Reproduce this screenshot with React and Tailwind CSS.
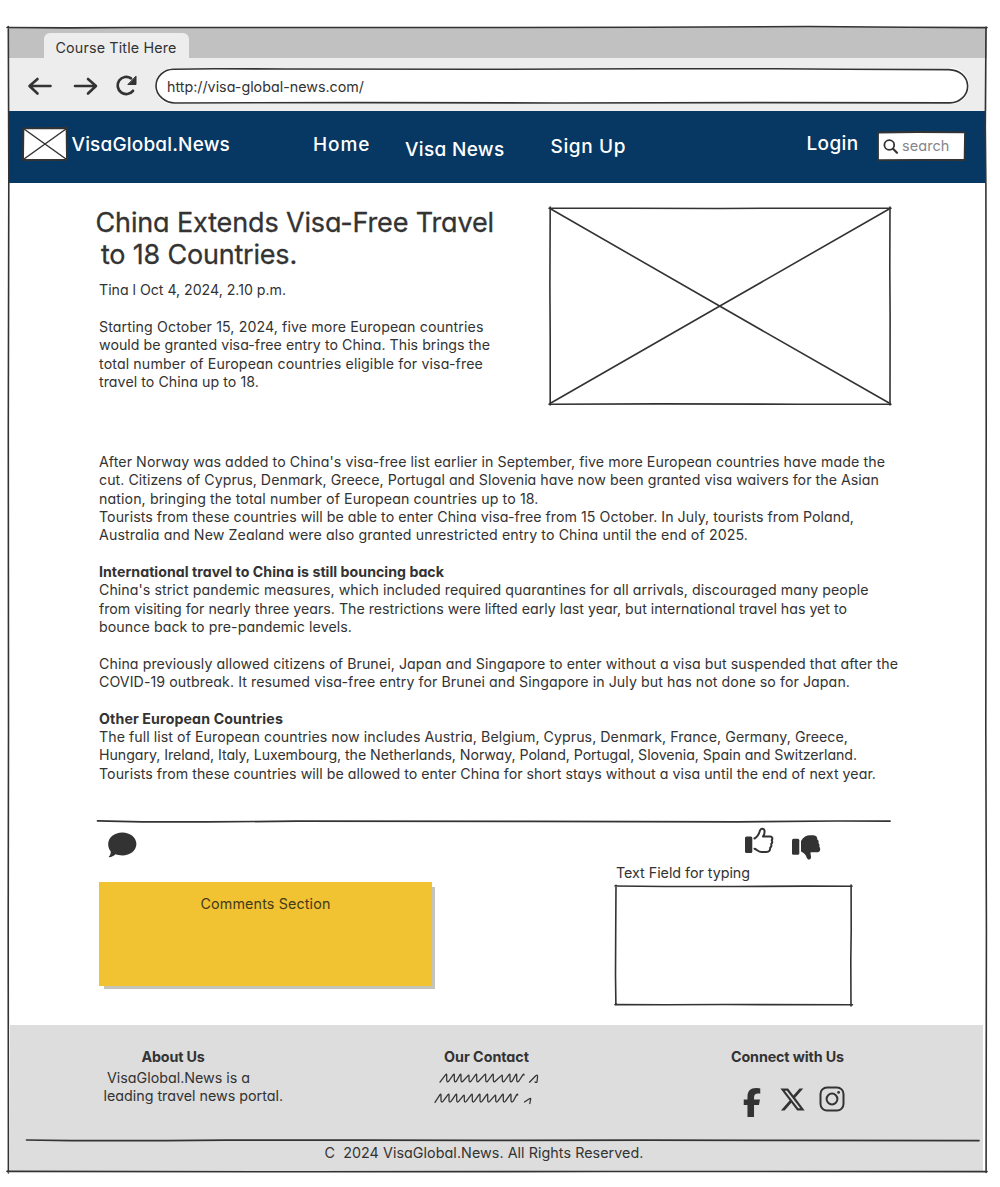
import { useLayoutEffect, useRef } from "react";
import { FaFacebookF, FaXTwitter } from "react-icons/fa6";

const INK = "#333333";

// One line of text, tracked so that it fills the given width.
function Line({ w, className = "", children }) {
  const ref = useRef(null);
  useLayoutEffect(() => {
    const el = ref.current;
    el.style.letterSpacing = "0px";
    const natural = el.getBoundingClientRect().width;
    el.style.letterSpacing = `${(w - natural) / el.textContent.length}px`;
  }, [w]);
  return (
    <div className={`whitespace-pre ${className}`} style={{ width: w }}>
      <span ref={ref}>{children}</span>
    </div>
  );
}

function Sketch({ w, h, className = "", children }) {
  return (
    <svg
      width={w}
      height={h}
      viewBox={`0 0 ${w} ${h}`}
      fill="none"
      stroke={INK}
      strokeWidth="1.6"
      strokeLinecap="round"
      strokeLinejoin="round"
      className={`block shrink-0 overflow-visible ${className}`}
    >
      {children}
    </svg>
  );
}

// Handwriting scribble: slanted up strokes joined by short steep down strokes.
function scribble(startX, top, bottom, peaks) {
  let d = `M${startX} ${bottom}`;
  peaks.forEach((x, i) => {
    const lift = (i * 3) % 4 === 1 ? 1 : 0;
    d += `L${x - 1} ${top + lift + 0.6}Q${x} ${top + lift - 0.4} ${x} ${top + lift + 1}`;
    if (i < peaks.length - 1) {
      d += `L${x} ${bottom - 2}Q${x + 0.4} ${bottom + 0.8} ${x + 2.2} ${bottom - 1.2}`;
    }
  });
  return d;
}

const scribbleTop = scribble(6, 3, 11.2, [12.7, 20.3, 27, 35, 42.7, 51.7, 59.3, 68.3, 76, 82.7, 90]);
const scribbleLow = scribble(1, 23, 31.4, [7, 15, 22.7, 30.3, 38.3, 46, 53.7, 61.7, 69.3, 77, 83.7]);

const lead = [
  [384.5, "Starting October 15, 2024, five more European countries"],
  [391, "would be granted visa-free entry to China. This brings the"],
  [384, "total number of European countries eligible for visa-free"],
  [160, "travel to China up to 18."],
];

const body = [
  [786, "After Norway was added to China's visa-free list earlier in September, five more European countries have made the"],
  [780, "cut. Citizens of Cyprus, Denmark, Greece, Portugal and Slovenia have now been granted visa waivers for the Asian"],
  [439.5, "nation, bringing the total number of European countries up to 18."],
  [755, "Tourists from these countries will be able to enter China visa-free from 15 October. In July, tourists from Poland,"],
  [649, "Australia and New Zealand were also granted unrestricted entry to China until the end of 2025."],
  null,
  [345, "International travel to China is still bouncing back", true],
  [769.5, "China's strict pandemic measures, which included required quarantines for all arrivals, discouraged many people"],
  [748, "from visiting for nearly three years. The restrictions were lifted early last year, but international travel has yet to"],
  [253, "bounce back to pre-pandemic levels."],
  null,
  [799, "China previously allowed citizens of Brunei, Japan and Singapore to enter without a visa but suspended that after the"],
  [751, "COVID-19 outbreak. It resumed visa-free entry for Brunei and Singapore in July but has not done so for Japan."],
  null,
  [184, "Other European Countries", true],
  [749, "The full list of European countries now includes Austria, Belgium, Cyprus, Denmark, France, Germany, Greece,"],
  [758, "Hungary, Ireland, Italy, Luxembourg, the Netherlands, Norway, Poland, Portugal, Slovenia, Spain and Switzerland."],
  [777, "Tourists from these countries will be allowed to enter China for short stays without a visa until the end of next year."],
];

function Browser() {
  return (
    <header>
      <div className="flex h-[31px] items-end bg-[#c1c1c1] pl-9">
        <div className="h-[25px] w-[145px] rounded-t-md bg-[#ededed] pl-[11.5px] text-[14.3px] leading-[30px]">
          <Line w={121}>Course Title Here</Line>
        </div>
      </div>
      <div className="flex h-[53px] items-start bg-[#ededed] pl-5">
        <Sketch w={25} h={20} className="mt-[18px]">
          <path d="M2 10h20.5M9.5 3l-8 7 8 7.5" strokeWidth="2.6" />
        </Sketch>
        <Sketch w={25} h={20} className="ml-5 mt-[18px]">
          <path d="M2 10h20.5M15 3l8 7-8 7.5" strokeWidth="2.6" />
        </Sketch>
        <Sketch w={23} h={22} className="ml-4 mt-4">
          <path d="M17 4.3a8.6 8.6 0 1 0 2 12.5" strokeWidth="2.7" />
          <path d="M22 2.500v8h-7.800z" fill={INK} strokeWidth="1" />
        </Sketch>
        <div className="relative ml-[18px] mt-[10px] h-9 w-[814px] rounded-full bg-white pl-3 text-[14.3px] leading-[37px]">
          <Sketch w={814} h={36} className="absolute left-0 top-0">
            <path d="M18 1.3L60 .8L130 1L330 1.3L490 .8L620 .7L690 1.2L794 1.6C804 2 812 8 812.6 17.5C813 27 805 34.5 795 34.9L600 34.6L400 35L200 34.6L20 35C10 35 1 27 1 18C1 8.5 9 1.5 18 1.3Z" />
          </Sketch>
          <Line w={197}>http://visa-global-news.com/</Line>
        </div>
      </div>
    </header>
  );
}

function Nav() {
  return (
    <nav className="flex h-[72px] w-[978px] items-start bg-[#073763] pl-[14px] text-[19px] font-medium leading-6 text-white">
      <Sketch w={46} h={34} className="mt-4">
        <path d="M1.4 1.4L44.6 1L45 32.8L1 33Z" fill="white" strokeWidth="1.9" />
        <path d="M2 2L44 32M44 2L2 32" strokeWidth="1.5" />
      </Sketch>
      <Line w={158.5} className="ml-[3.5px] mt-[22px]">VisaGlobal.News</Line>
      <Line w={57.5} className="ml-[83px] mt-[22px]">Home</Line>
      <Line w={99.5} className="ml-[34.5px] mt-[27px]">Visa News</Line>
      <Line w={75.5} className="ml-[46px] mt-6">Sign Up</Line>
      <Line w={52} className="ml-[180.5px] mt-[21px]">Login</Line>
      <div className="relative ml-[18px] mt-[20px] h-[30px] w-[89px]">
        <Sketch w={89} h={30} className="absolute left-0 top-0">
          <path d="M1 1.5L40 1L88 1.4L87.6 29L40 28.8L1 29.2Z" fill="white" strokeWidth="1.8" />
          <circle cx="12.3" cy="14" r="4.9" strokeWidth="1.8" />
          <path d="M16 17.8l4 4" strokeWidth="2.1" />
        </Sketch>
        <div className="relative ml-[25.5px] text-[14.5px] font-normal leading-[30px] text-[#85858a]">
          <Line w={47.5}>search</Line>
        </div>
      </div>
    </nav>
  );
}

function Hero() {
  return (
    <section className="flex h-[256px] pl-[88px]">
      <div className="w-[453px]">
        <h1 className="pt-6 text-[27px] leading-8 [-webkit-text-stroke:0.3px_#333333]">
          <Line w={398.5} className="-ml-[0.5px]">China Extends Visa-Free Travel</Line>
          <Line w={196} className="ml-[5px]">to 18 Countries.</Line>
        </h1>
        <div className="ml-[3px] mt-[10px] text-[14.2px] leading-[18.33px]">
          <Line w={187}>Tina l Oct 4, 2024, 2.10 p.m.</Line>
          <div className="mt-[18.6px]">
            {lead.map(([w, t]) => <Line key={t} w={w}>{t}</Line>)}
          </div>
        </div>
      </div>
      <Sketch w={342} h={198} className="mt-6">
        <path d="M0 1.2L80 1.2L170 1.5L240 1.2L342 1.2M341 0L340.8 60L341.1 110L341 198M342 197.3L250 197.2L110 196.9L0 197.3M1.2 198L1.2 130L.9 80L1.2 0" />
        <path d="M1 1.5L171 99.3L341 196.5M341 1.5L170 99.5L1 196.5" />
      </Sketch>
    </section>
  );
}

function Feedback() {
  return (
    <section className="h-[205px] pl-[89px]">
      <Sketch w={794} h={3}>
        <path d="M.5 .9L45 1.8L110 1.9L200 1.2L430 1.4L640 1.8L740 1L793 1.2" strokeWidth="1.7" />
      </Sketch>
      <div className="flex">
        <div className="w-[518px]">
          <Sketch w={30} h={26} className="ml-[10px] mt-[9px]">
            <path d="M15.3 .5C23.2 .5 29.400 5.5 29.400 12S23.2 23.5 15.3 23.5C12.8 23.5 10.5 23 8.5 22.3C6.5 24.3 4 25.4 1.5 25.1C3 23.5 4 21.5 3.7 19.4C2 17.5 1.2 15 1.2 12C1.2 5.5 7.4 .5 15.3 .5Z" fill={INK} stroke="none" />
          </Sketch>
          <div className="ml-[2px] mt-6 h-[104px] w-[333px] bg-[#f1c232] pl-[101.5px] text-[14.3px] leading-[43px] shadow-[4px_4px_0_-1px_#c4c4bc]">
            <Line w={130} className="text-[#443a1c]">Comments Section</Line>
          </div>
        </div>
        <div>
          <div className="flex pl-[130px] pt-1">
            <Sketch w={29} h={29}>
              <rect x="0" y="9.5" width="7.3" height="16.5" rx="1.5" fill={INK} stroke="none" />
              <path d="M9.5 11.5C12.5 10 14 7 15 3.5C15.8 .6 19.6 1.3 19.6 4.6C19.6 6.5 19 8.3 18 9.5H25.2C27.3 9.5 28 11.7 26.7 13.2C27.5 14.5 27 16.2 26.2 17C26.7 18.5 26 20 25.2 20.5C25.3 23.5 24.2 25 21.3 25H16.5C13.5 25 12 22.6 9.5 21.7" strokeWidth="2" />
            </Sketch>
            <Sketch w={29} h={27} className="ml-[18px] mt-2">
              <rect x="0" y="3.8" width="7.3" height="16" rx="1.5" fill={INK} stroke="none" />
              <path d="M9 6C11.5 2 14.5 .3 18 .3H21.5C24.3 .5 25.5 2.3 25.3 4.6C26.7 5.4 27 6.8 26.4 8C27.5 9 27.8 10.6 27.3 11.8C29 13.5 28.3 17.2 25.8 17.2H18.7C18 18.8 19.3 20.5 19 22.5C18.6 25.2 15.6 25.2 14.8 22.8C14 20.5 13 18.3 9 16.5Z" fill={INK} stroke="none" />
            </Sketch>
          </div>
          <Line w={134} className="ml-[1px] mt-px text-[14.3px] leading-5">Text Field for typing</Line>
          <Sketch w={237} h={121} className="mt-[2px]">
            <path d="M0 1L50 1.5L120 1.5L190 1.1L237 1.2M236.1 0L236.2 45L235.8 75L236 121M237.5 119.8L110 119.5L50 119.8L0 119.6M.9 120L.5 90L.7 50L1 .3" />
          </Sketch>
        </div>
      </div>
    </section>
  );
}

function Footer() {
  return (
    <footer className="ml-[2px] flex h-[146px] w-[973px] flex-col bg-[#dddddd] text-[14.3px] leading-[18.33px]">
      <div className="flex h-[114px] pt-[23px]">
        <div className="w-[424px] pl-[93.5px]">
          <Line w={63} className="ml-[38px] font-bold">About Us</Line>
          <Line w={143} className="ml-[3.5px] mt-[2.7px]">VisaGlobal.News is a</Line>
          <Line w={179.5}>leading travel news portal.</Line>
        </div>
        <div className="w-[297px]">
          <Line w={85} className="ml-[10px] font-bold">Our Contact</Line>
          <Sketch w={106} h={34} className="mt-[5px]">
            <path d={scribbleTop} strokeWidth="1.25" />
            <path d={scribbleLow} strokeWidth="1.25" />
            <path d="M95.5 11.2L101.5 5Q104 3 103.5 6L103 11Q102 11.8 101 11M90.5 31L95 28Q97.5 26.5 96.5 29L95.8 32.5" strokeWidth="1.25" />
          </Sketch>
        </div>
        <div className="text-[#333333]">
          <Line w={113} className="font-bold">Connect with Us</Line>
          <div className="flex items-start pl-[9px] pt-5">
            <FaFacebookF className="mt-[2px] h-[29px] w-[24px]" />
            <FaXTwitter className="ml-[15px] h-[27px] w-[27px]" />
            <Sketch w={26} h={26} className="ml-[13px]">
              <rect x="1.5" y="1.5" width="23" height="23" rx="6.5" strokeWidth="2" />
              <circle cx="13" cy="13" r="5.4" strokeWidth="2" />
              <circle cx="19.6" cy="6.4" r="1.4" fill={INK} stroke="none" />
            </Sketch>
          </div>
        </div>
      </div>
      <Sketch w={954} h={3} className="ml-4">
        <path d="M.5 1L45 1.7L140 1.7L200 1.2L340 1.2L460 1.4L620 1.2L760 1.3L953 1.6" strokeWidth="1.7" />
      </Sketch>
      <Line w={319} className="ml-[314.5px] mt-[2px]">C  2024 VisaGlobal.News. All Rights Reserved.</Line>
    </footer>
  );
}

export default function App() {
  return (
    <div className="h-[1187px] w-[1000px] overflow-hidden bg-white pl-2 pt-[27px] font-['Inter','Liberation_Sans',sans-serif] text-[#333333] [font-feature-settings:'cv11']">
      <div className="relative h-[1145px] w-[979px]">
        <Browser />
        <Nav />
        <Hero />
        <article className="h-[381px] pl-[91px] pt-[13.9px] text-[14.2px] leading-[18.35px]">
          {body.map((row, i) =>
            row ? (
              <Line key={i} w={row[0]} className={row[2] ? "font-bold" : ""}>{row[1]}</Line>
            ) : (
              <div key={i} className="h-[18.35px]" />
            )
          )}
        </article>
        <Feedback />
        <Footer />
        <Sketch w={979} h={1145} className="pointer-events-none absolute left-0 top-0">
          <path d="M-1 .5L60 .9L125 .5L420 .5L640 .3L800 -.5L900 .3L979 .6M978 0L977.3 100L977.9 160L978.2 400L977.8 700L978.4 900L978.1 1145.5M979 1144.6L600 1144.5L300 1144.8L-1 1144.4M.4 1146L.2 900L.5 700L.3 400L.8 150L.3 -.5" />
        </Sketch>
      </div>
    </div>
  );
}
